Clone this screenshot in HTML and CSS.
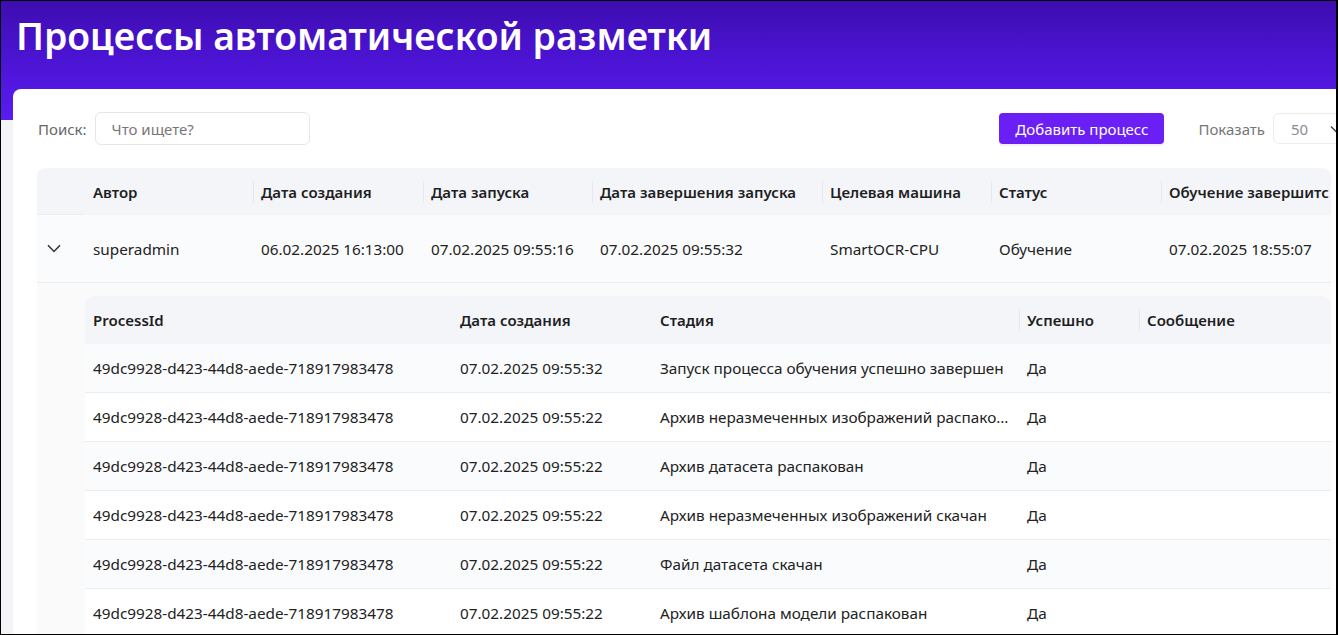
FILE: index.html
```html
<!DOCTYPE html>
<html lang="ru">
<head>
<meta charset="utf-8">
<title>Процессы автоматической разметки</title>
<link rel="stylesheet" href="styles.css">
</head>
<body>
<div class="frame">
  <header class="hero">
    <h1 class="title">Процессы автоматической разметки</h1>
  </header>
  <main class="card">
    <div class="toolbar">
      <label class="search">
        <span class="search-label">Поиск:</span>
        <span class="input">Что ищете?</span>
      </label>
      <div class="actions">
        <button class="btn-primary">Добавить процесс</button>
        <span class="show-label">Показать</span>
        <span class="select"><span class="select-value">50</span>
          <svg class="select-arrow" width="12" height="8" viewBox="0 0 12 8"><path d="M1 1.5 L6 6.5 L11 1.5" fill="none" stroke="#444" stroke-width="1.4"/></svg>
        </span>
      </div>
    </div>

    <div class="table-wrap">
      <div class="grid main-grid main-head">
        <div class="hcell expand-h"></div>
        <div class="hcell">Автор</div>
        <div class="hcell sep">Дата создания</div>
        <div class="hcell sep">Дата запуска</div>
        <div class="hcell sep">Дата завершения запуска</div>
        <div class="hcell sep">Целевая машина</div>
        <div class="hcell sep">Статус</div>
        <div class="hcell sep sep-end">Обучение завершитс</div>
      </div>
      <div class="grid main-grid main-row">
        <div class="cell expand">
          <svg width="14" height="9" viewBox="0 0 14 9"><path d="M1 1.2 L7 7.5 L13 1.2" fill="none" stroke="#333" stroke-width="1.5"/></svg>
        </div>
        <div class="cell">superadmin</div>
        <div class="cell">06.02.2025 16:13:00</div>
        <div class="cell">07.02.2025 09:55:16</div>
        <div class="cell">07.02.2025 09:55:32</div>
        <div class="cell">SmartOCR-CPU</div>
        <div class="cell">Обучение</div>
        <div class="cell">07.02.2025 18:55:07</div>
      </div>

      <div class="expanded">
        <div class="sub">
          <div class="grid sub-grid sub-head">
            <div class="hcell">ProcessId</div>
            <div class="hcell">Дата создания</div>
            <div class="hcell">Стадия</div>
            <div class="hcell sep">Успешно</div>
            <div class="hcell sep">Сообщение</div>
          </div>
          <div class="grid sub-grid sub-row odd">
            <div class="cell">49dc9928-d423-44d8-aede-718917983478</div>
            <div class="cell">07.02.2025 09:55:32</div>
            <div class="cell ellipsis">Запуск процесса обучения успешно завершен</div>
            <div class="cell">Да</div>
            <div class="cell"></div>
          </div>
          <div class="grid sub-grid sub-row">
            <div class="cell">49dc9928-d423-44d8-aede-718917983478</div>
            <div class="cell">07.02.2025 09:55:22</div>
            <div class="cell ellipsis">Архив неразмеченных изображений распакован</div>
            <div class="cell">Да</div>
            <div class="cell"></div>
          </div>
          <div class="grid sub-grid sub-row odd">
            <div class="cell">49dc9928-d423-44d8-aede-718917983478</div>
            <div class="cell">07.02.2025 09:55:22</div>
            <div class="cell ellipsis">Архив датасета распакован</div>
            <div class="cell">Да</div>
            <div class="cell"></div>
          </div>
          <div class="grid sub-grid sub-row">
            <div class="cell">49dc9928-d423-44d8-aede-718917983478</div>
            <div class="cell">07.02.2025 09:55:22</div>
            <div class="cell ellipsis">Архив неразмеченных изображений скачан</div>
            <div class="cell">Да</div>
            <div class="cell"></div>
          </div>
          <div class="grid sub-grid sub-row odd">
            <div class="cell">49dc9928-d423-44d8-aede-718917983478</div>
            <div class="cell">07.02.2025 09:55:22</div>
            <div class="cell ellipsis">Файл датасета скачан</div>
            <div class="cell">Да</div>
            <div class="cell"></div>
          </div>
          <div class="grid sub-grid sub-row">
            <div class="cell">49dc9928-d423-44d8-aede-718917983478</div>
            <div class="cell">07.02.2025 09:55:22</div>
            <div class="cell ellipsis">Архив шаблона модели распакован</div>
            <div class="cell">Да</div>
            <div class="cell"></div>
          </div>
        </div>
      </div>
    </div>
  </main>
</div>
</body>
</html>
```
FILE: styles.css
```css
* { box-sizing: border-box; }
html, body { margin: 0; padding: 0; }
body {
  font-family: "Noto Sans", "Open Sans", sans-serif;
  color: #222;
  background: #fff;
}
.frame {
  width: 1338px;
  height: 635px;
  overflow: hidden;
  border: 1px solid #000;
  border-right-width: 2px;
  background: #f4f4f8;
  position: relative;
}
.hero {
  height: 119px;
  background: linear-gradient(180deg, #3d0db0 0%, #4c14d4 50%, #5a1cf0 100%);
  padding: 9px 0 0 15px;
}
.title {
  margin: 0;
  color: #fff;
  font-size: 37.3px;
  font-weight: 600;
  line-height: 52px;
  letter-spacing: 0;
}
.card {
  margin: -31px 0 0 12px;
  width: 1364px;
  background: #fff;
  border-radius: 8px 8px 0 0;
  padding: 23px 24px 0 24px;
  height: 600px;
}
.toolbar {
  display: flex;
  align-items: center;
  justify-content: space-between;
  height: 33px;
  padding-left: 1px;
}
.search { display: flex; align-items: center; gap: 8px; }
.search-label { font-size: 15px; color: #666; }
.input {
  width: 215px;
  height: 33px;
  border: 1px solid #e6e6e6;
  border-radius: 6px;
  padding-left: 16px;
  display: flex;
  align-items: center;
  font-size: 15px;
  color: #777;
}
.actions { display: flex; align-items: center; }
.btn-primary {
  height: 31px;
  width: 165px;
  border: 0;
  border-radius: 4px;
  background: #6a1ff5;
  color: #fff;
  font-family: inherit;
  font-size: 15px;
  box-shadow: 0 2px 0 rgba(106, 31, 245, 0.08);
  margin-right: 34px;
}
.show-label { font-size: 15px; color: #777; margin-right: 8px; }
.select {
  width: 80px;
  height: 31px;
  border: 1px solid #ececec;
  border-radius: 6px;
  display: flex;
  align-items: center;
  justify-content: space-between;
  padding: 0 10px 0 17px;
  font-size: 15px;
  color: #8a8a99;
}
.table-wrap {
  margin-top: 23px;
  width: 1294px;
  overflow: hidden;
}
.grid { display: grid; }
.main-grid { grid-template-columns: 48px 168px 170px 169px 230px 169px 170px 200px; }
.sub-grid { grid-template-columns: 367px 200px 367px 120px 200px; }
.main-head, .sub-head {
  background: #f4f5f9;
  font-weight: 600;
  font-size: 15px;
  color: #1f1f1f;
}
.main-head { height: 47px; border-radius: 8px 8px 0 0; }
.hcell {
  display: flex;
  align-items: center;
  padding-left: 8px;
  position: relative;
  white-space: nowrap;
  overflow: hidden;
}
.sep::before {
  content: "";
  position: absolute;
  left: 0;
  top: 50%;
  height: 22px;
  margin-top: -11px;
  width: 1px;
  background: #e6e7ee;
}
.sep-end::after {
  content: "";
  position: absolute;
  right: 0;
  top: 50%;
  height: 22px;
  margin-top: -11px;
  width: 1px;
  background: #e6e7ee;
}
.expand-h { border-bottom: 1px solid #eceef2; }
.main-row {
  height: 68px;
  background: #fafbfc;
  border-bottom: 1px solid #ececee;
}
.cell {
  display: flex;
  align-items: center;
  padding-left: 8px;
  white-space: nowrap;
  overflow: hidden;
  font-size: 15.3px;
  color: #222;
}
.expand { padding-left: 10px; }
.expanded {
  background: #fafafa;
  padding: 13px 0 0 48px;
}
.sub { background: #fff; border-radius: 8px 8px 0 0; overflow: hidden; }
.sub-head { height: 48px; border-radius: 8px 8px 0 0; }
.sub-row {
  height: 49px;
  border-bottom: 1px solid #ededef;
}
.sub-row.odd { background: #fafbfc; }
.ellipsis {
  display: block;
  line-height: 48px;
  padding-right: 8px;
  text-overflow: ellipsis;
}
```
